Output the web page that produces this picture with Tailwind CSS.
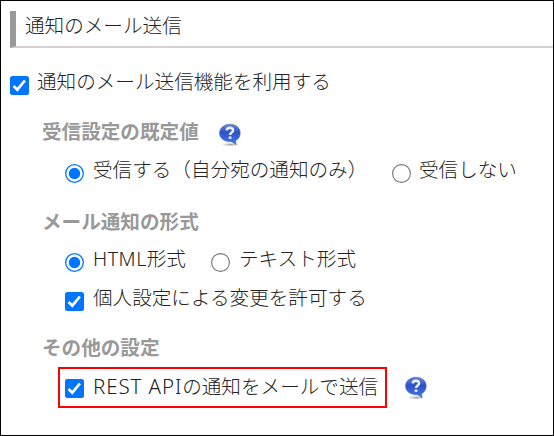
<!DOCTYPE html>
<html lang="ja">
<head>
<meta charset="utf-8">
<title>通知のメール送信</title>
<script src="https://cdn.jsdelivr.net/npm/@tailwindcss/browser@4"></script>
</head>
<body class="bg-white">
<svg width="0" height="0" class="absolute">
  <defs>
    <linearGradient id="blue" x1="0" y1="0" x2="0" y2="1"><stop offset="0" stop-color="#6487dd"/><stop offset=".4" stop-color="#2d52c4"/><stop offset="1" stop-color="#4678ee"/></linearGradient>
    <radialGradient id="shade"><stop offset="0" stop-color="#000" stop-opacity=".35"/><stop offset="1" stop-color="#000" stop-opacity="0"/></radialGradient>
    <symbol id="help" viewBox="0 0 24 24">
      <ellipse cx="12.500" cy="21.600" rx="9" ry="2" fill="url(#shade)"/>
      <path d="M12 1.300C18 1.300 22.200 4.900 22.200 10C22.200 13.700 20.300 16.300 17.500 17.800L18 21.600L13.600 18.700C6.200 19 1.600 15.300 1.600 10C1.600 4.900 6 1.300 12 1.300Z" fill="url(#blue)" stroke="#4365bd" stroke-width=".6"/>
      <path d="M8.700 7.300C8.900 5.300 10.100 4.700 11.800 4.700C13.800 4.700 15.100 5.700 15.100 7.400C15.100 9.600 12 9.600 12 12.100" fill="none" stroke="#f0f2fa" stroke-width="2.400"/>
      <rect x="10.700" y="13.500" width="2.700" height="2.400" fill="#f0f2fa"/>
    </symbol>
    <symbol id="check" viewBox="0 0 19 19">
      <rect width="19" height="19" rx="2.500" fill="#0075ff"/>
      <path d="M3.600 10L7.300 13.700L14.900 4.500" fill="none" stroke="#fff" stroke-width="2.700"/>
    </symbol>
    <symbol id="on" viewBox="0 0 19 19">
      <circle cx="9.500" cy="9.500" r="8.800" fill="#fff" stroke="#0075ff" stroke-width="1.300"/>
      <circle cx="9.500" cy="9.500" r="5.700" fill="#0075ff"/>
    </symbol>
    <symbol id="off" viewBox="0 0 19 19">
      <circle cx="9.500" cy="9.500" r="8.900" fill="#fff" stroke="#767676" stroke-width="1.100"/>
    </symbol>
  </defs>
</svg>
<main class="flex h-[436px] w-[554px] flex-col border border-black pt-[10px] text-[19.6px] leading-[30px] font-light whitespace-nowrap text-[#222] font-['Noto_Sans','Noto_Sans_CJK_JP',sans-serif]">
  <h1 class="ml-[9px] h-[37px] border-b-2 border-l-6 border-b-[#d6d1ce] border-l-[#999] pl-[9px]">通知のメール送信</h1>
  <label class="mt-[19px] ml-[9px] flex h-[30px] gap-[8px]"><svg class="mt-[9px] size-[19px]"><use href="#check"/></svg><span>通知のメール送信機能を利用する</span></label>

  <h2 class="mt-[20px] ml-[41px] flex h-[30px] font-bold text-[#999]"><span>受信設定の既定値</span><svg class="mt-[6px] ml-[19px] size-[24px]"><use href="#help"/></svg></h2>
  <div class="mt-[8px] ml-[64px] flex h-[30px]">
    <label class="flex w-[327px] gap-[9px]"><svg class="mt-[9px] size-[19px]"><use href="#on"/></svg><span>受信する（自分宛の通知のみ）</span></label>
    <label class="flex gap-[8px]"><svg class="mt-[9px] size-[19px]"><use href="#off"/></svg><span>受信しない</span></label>
  </div>

  <h2 class="mt-[22px] ml-[41px] h-[30px] font-bold text-[#999]">メール通知の形式</h2>
  <div class="mt-[7px] ml-[64px] flex h-[30px]">
    <label class="flex w-[146px] gap-[9px]"><svg class="mt-[9px] size-[19px]"><use href="#on"/></svg><span><span class="tracking-[0.5px]">HTML</span>形式</span></label>
    <label class="flex gap-[9px]"><svg class="mt-[9px] size-[19px]"><use href="#off"/></svg><span>テキスト形式</span></label>
  </div>
  <label class="mt-[9px] ml-[64px] flex h-[30px] gap-[9px]"><svg class="mt-[9px] size-[19px]"><use href="#check"/></svg><span>個人設定による変更を許可する</span></label>

  <h2 class="mt-[20px] ml-[41px] h-[30px] font-bold text-[#999]">その他の設定</h2>
  <div class="mt-[4px] ml-[57px] flex h-[41px]">
    <label class="flex w-[329px] gap-[9px] border-2 border-[#f00] pt-[2px] pl-[5px]"><svg class="mt-[8px] size-[19px] shrink-0"><use href="#check"/></svg><span><span class="text-[20.5px] tracking-[0.9px]">REST API</span>の通知をメールで送信</span></label>
    <svg class="mt-[9px] ml-[17px] size-[24px]"><use href="#help"/></svg>
  </div>
</main>
</body>
</html>
